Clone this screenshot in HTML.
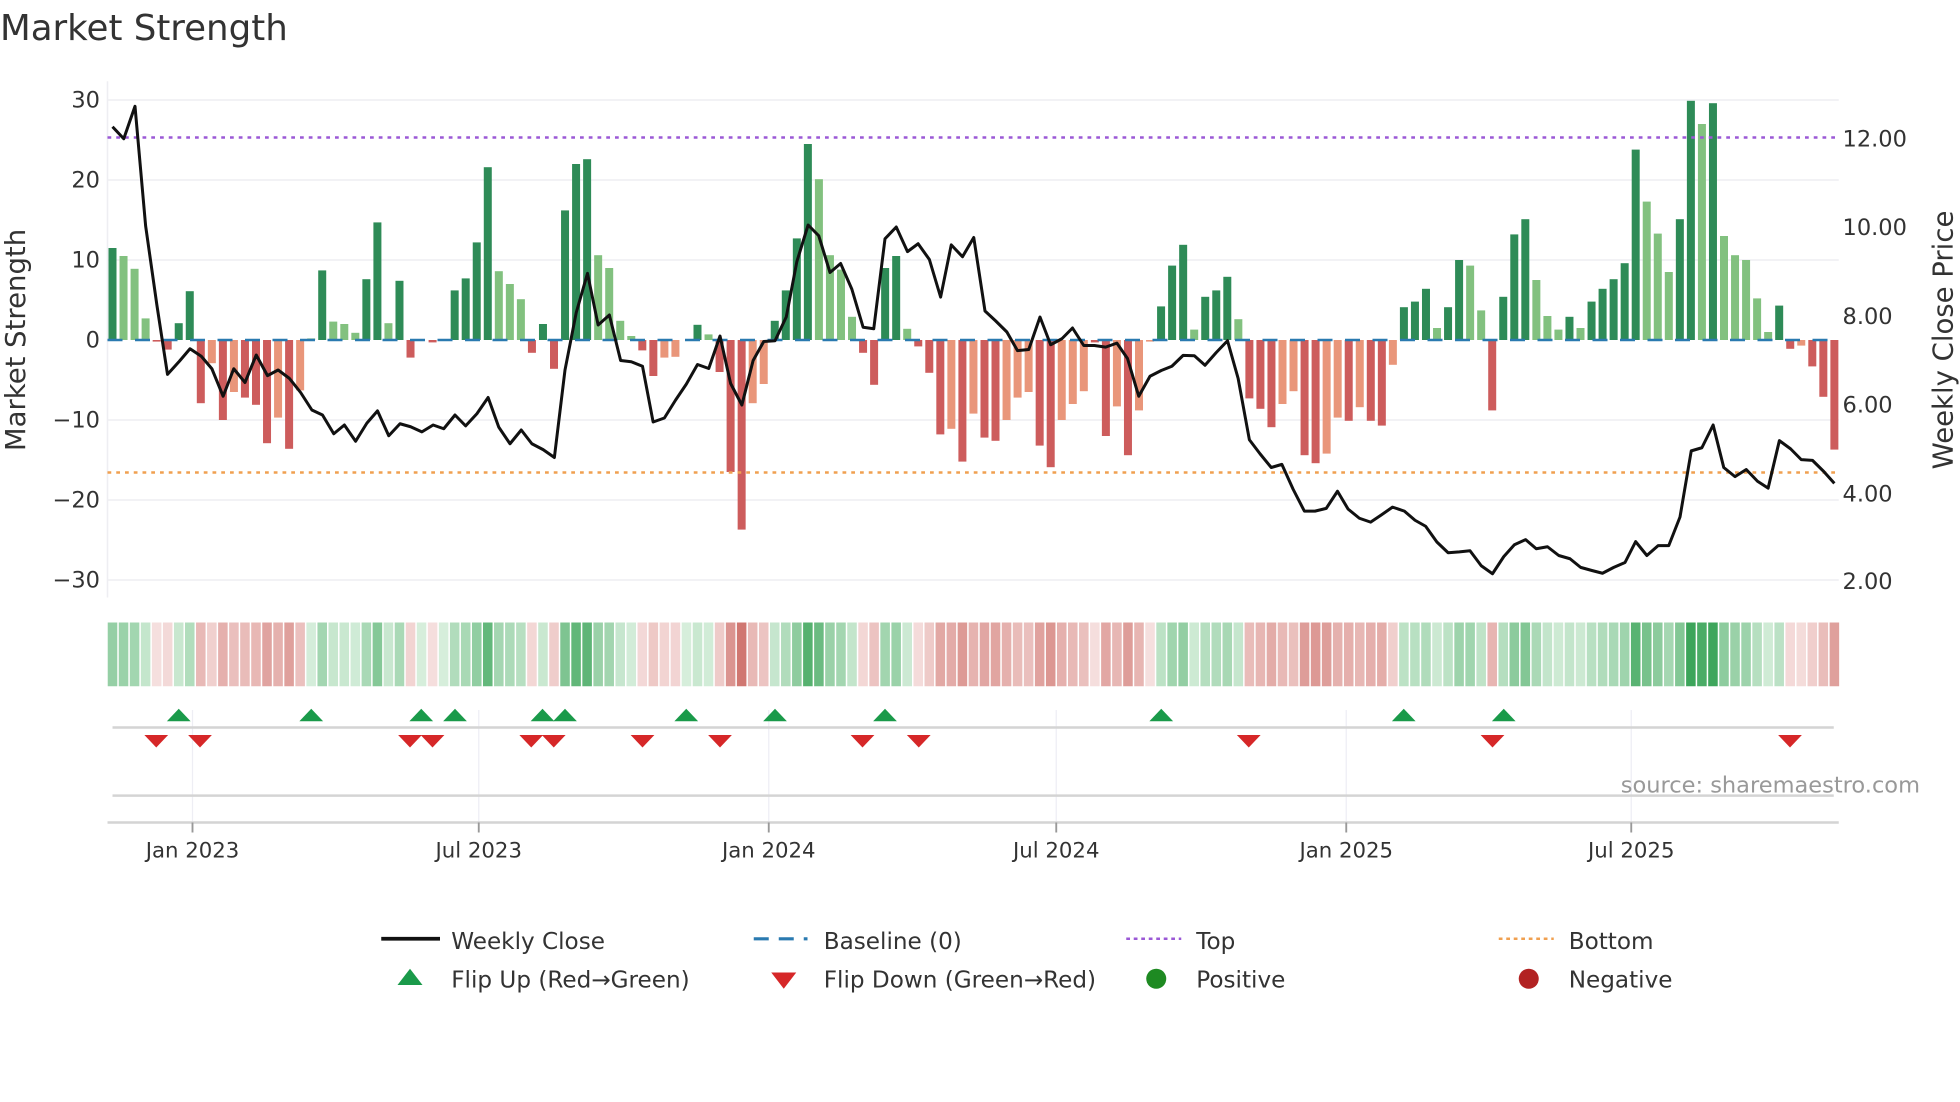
<!DOCTYPE html>
<html><head><meta charset="utf-8"><style>
html,body{margin:0;padding:0;background:#fff;}
svg{display:block;}
text{font-family:"DejaVu Sans","Liberation Sans",sans-serif;fill:#333;}
</style></head><body>
<svg id="s" width="1960" height="1102" viewBox="0 0 1568 881.6" xmlns="http://www.w3.org/2000/svg">
<rect width="1568" height="882" fill="#fff"/>
<text x="0" y="32" font-size="28.5">Market Strength</text>
<g stroke="#eeeef2" stroke-width="1.2">
<line x1="86" x2="1471" y1="80" y2="80"/><line x1="86" x2="1471" y1="144" y2="144"/><line x1="86" x2="1471" y1="208" y2="208"/>
<line x1="86" x2="1471" y1="336" y2="336"/><line x1="86" x2="1471" y1="400" y2="400"/><line x1="86" x2="1471" y1="464" y2="464"/>
<line x1="86" x2="86" y1="65" y2="478"/>
</g>
<g font-size="18" text-anchor="end">
<text x="80" y="86">30</text><text x="80" y="150">20</text><text x="80" y="214">10</text><text x="80" y="278">0</text>
<text x="80" y="342">−10</text><text x="80" y="406">−20</text><text x="80" y="470">−30</text>
</g>
<g font-size="18">
<text x="1474" y="117">12.00</text><text x="1474" y="188">10.00</text><text x="1474" y="259">8.00</text>
<text x="1474" y="330">6.00</text><text x="1474" y="401">4.00</text><text x="1474" y="471">2.00</text>
</g>
<text transform="translate(20,272) rotate(-90)" font-size="22" text-anchor="middle">Market Strength</text>
<text transform="translate(1562,272) rotate(-90)" font-size="22" text-anchor="middle">Weekly Close Price</text>
<g id="bars"></g>
<line x1="86" x2="1471" y1="272" y2="272" stroke="#2a7ab0" stroke-width="2" stroke-dasharray="12 10"/>
<line x1="86" x2="1471" y1="110" y2="110" stroke="#9b59d6" stroke-width="2" stroke-dasharray="3 4"/>
<line x1="86" x2="1471" y1="378" y2="378" stroke="#f0a050" stroke-width="2" stroke-dasharray="3 4"/>
<polyline id="price" fill="none" stroke="#111" stroke-width="2.4" stroke-linejoin="round"/>
<g id="heat"></g>
<g stroke="#eeeef4" stroke-width="1">
<line x1="154" x2="154" y1="568" y2="658"/><line x1="383" x2="383" y1="568" y2="658"/><line x1="615" x2="615" y1="568" y2="658"/>
<line x1="845" x2="845" y1="568" y2="658"/><line x1="1077" x2="1077" y1="568" y2="658"/><line x1="1305" x2="1305" y1="568" y2="658"/>
</g>
<line x1="90" x2="1467" y1="582" y2="582" stroke="#d4d4d4" stroke-width="2"/>
<line x1="90" x2="1467" y1="636.5" y2="636.5" stroke="#d4d4d4" stroke-width="2"/>
<line x1="86" x2="1471" y1="658" y2="658" stroke="#d4d4d4" stroke-width="2"/>
<g stroke="#999" stroke-width="1.5">
<line x1="154" x2="154" y1="658" y2="666"/><line x1="383" x2="383" y1="658" y2="666"/><line x1="615" x2="615" y1="658" y2="666"/>
<line x1="845" x2="845" y1="658" y2="666"/><line x1="1077" x2="1077" y1="658" y2="666"/><line x1="1305" x2="1305" y1="658" y2="666"/>
</g>
<g id="flips"></g>
<text x="1536" y="634" font-size="18" text-anchor="end" style="fill:#999">source: sharemaestro.com</text>
<g font-size="17" text-anchor="middle">
<text x="154" y="686">Jan 2023</text><text x="383" y="686">Jul 2023</text><text x="615" y="686">Jan 2024</text>
<text x="845" y="686">Jul 2024</text><text x="1077" y="686">Jan 2025</text><text x="1305" y="686">Jul 2025</text>
</g>
<g font-size="18.5">
<line x1="305" x2="352" y1="751" y2="751" stroke="#111" stroke-width="3"/>
<text x="361" y="759">Weekly Close</text>
<line x1="603" x2="646" y1="751" y2="751" stroke="#2a7ab0" stroke-width="2.5" stroke-dasharray="12 8"/>
<text x="659" y="759">Baseline (0)</text>
<line x1="901" x2="945" y1="751" y2="751" stroke="#9b59d6" stroke-width="2" stroke-dasharray="3 3"/>
<text x="957" y="759">Top</text>
<line x1="1199" x2="1243" y1="751" y2="751" stroke="#f0a050" stroke-width="2" stroke-dasharray="3 3"/>
<text x="1255" y="759">Bottom</text>
<polygon points="318,788 338,788 328,775" fill="#1a9a4a"/>
<text x="361" y="790">Flip Up (Red→Green)</text>
<polygon points="617,778 637,778 627,791" fill="#d62728"/>
<text x="659" y="790">Flip Down (Green→Red)</text>
<circle cx="925" cy="783" r="8" fill="#1e8a22"/>
<text x="957" y="790">Positive</text>
<circle cx="1223" cy="783" r="8" fill="#b22222"/>
<text x="1255" y="790">Negative</text>
</g>
</svg>
<script>
var V="11.5d 10.5l 8.9l 2.7l -0.2r -1.2r 2.1d 6.1d -7.9r -2.9s -10r -6.5s -7.2r -8.1r -12.9r -9.7s -13.6r -6.3s 0.2l 8.7d 2.3l 2l 0.9l 7.6d 14.7d 2.1l 7.4d -2.2r 0n -0.3r 0n 6.2d 7.7d 12.2d 21.6d 8.6l 7l 5.1l -1.6r 2d -3.6r 16.2d 22d 22.6d 10.6l 9l 2.4l 0.5l -1.3r -4.5r -2.2s -2.1s 0n 1.9d 0.7l -4r -16.5r -23.7r -7.9s -5.5s 2.4d 6.2d 12.7d 24.5d 20.1l 10.6l 8.8l 2.9l -1.6r -5.6r 9d 10.5d 1.4l -0.8r -4.1r -11.8r -11.1s -15.2r -9.2s -12.2r -12.6r -10s -7.2s -6.5s -13.2r -15.9r -10s -8s -6.4s -0.3r -12r -8.3s -14.4r -8.8s -0.2s 4.2d 9.3d 11.9d 1.3l 5.4d 6.2d 7.9d 2.6l -7.3r -8.6r -10.9r -8s -6.4s -14.4r -15.4r -14.2s -9.7s -10.1r -8.4s -10.1r -10.7r -3.1s 4.1d 4.8d 6.4d 1.5l 4.1d 10d 9.3l 3.7l -8.8r 5.4d 13.2d 15.1d 7.5l 3l 1.3l 2.9d 1.5l 4.8d 6.4d 7.6d 9.6d 23.8d 17.3l 13.3l 8.5l 15.1d 29.9d 27l 29.6d 13l 10.6l 10l 5.2l 1l 4.3d -1.1r -0.7s -3.3r -7.1r -13.7r".split(" ");
var C={d:"#2e8b57",l:"#82c17f",r:"#cd5c5c",s:"#e9967a",n:"#fff"};
var NS="http://www.w3.org/2000/svg";
function el(p,t,a){var e=document.createElementNS(NS,t);for(var k in a)e.setAttribute(k,a[k]);p.appendChild(e);return e;}
var bars=document.getElementById("bars"),heat=document.getElementById("heat");
var n=V.length,sp=1377.5/(n-1);
function mix(a,b,t){return "rgb("+a.map(function(x,i){return Math.round(x+(b[i]-x)*t)}).join(",")+")";}
for(var i=0;i<n;i++){
 var v=parseFloat(V[i]),c=V[i].slice(-1),x=90+i*sp;
 if(v!==0){var y=272-v*6.4;el(bars,"rect",{x:x-3.2,y:Math.min(y,272),width:6.4,height:Math.abs(v*6.4),fill:C[c]});}
 var col;
 if(v>=0){var t=Math.min(v/30,1);col=mix([214,238,219],[60,165,90],Math.pow(t,0.9));}
 else{var t=Math.min(-v/24,1);col=mix([246,224,223],[208,118,112],Math.pow(t,0.9));}
 el(heat,"rect",{x:x-sp/2+0.6,y:498,width:sp-1.2,height:51,fill:col});
}
var P=[[90,101.4],[99,111],[108,85],[116.5,180.7],[125.5,244],[134,299.5],[143.5,289],[152,279],[161,285],[169.5,295],[178.5,317],[187,295],[196,306],[205,284],[214,300.5],[222.5,296],[231.5,302.7],[240.5,314],[249.5,328],[258,332],[267,347],[275.5,340],[284.5,353],[293.5,338.5],[302,328.7],[311,348.6],[320,339],[328.5,341.4],[337.5,345.5],[346.5,340],[355,343],[364,332],[372.5,340.7],[381.5,331],[390.5,318],[399,341.7],[408,355],[417,344],[425.5,355],[434.5,359.7],[443.5,366],[452,296],[461,250],[470,218.7],[478.5,260],[487.5,252],[496.5,288.4],[505,289.4],[514,293],[522.5,337.6],[531.5,334.4],[540.5,320],[549,307.4],[558,291.6],[567,294.8],[576,268.8],[584.5,306.8],[593.5,324],[602.5,288.4],[611,273.2],[620,272.6],[629,253.6],[637.5,209.2],[646.5,180],[655,188.6],[664,218],[672.5,210.8],[681.5,231.4],[690.5,261.8],[699,263],[708,191],[717,181.6],[726,201.3],[734.5,195],[743.5,207.6],[752.5,237.7],[761,195.9],[770,205.4],[779,190],[788,248.8],[796.5,256.7],[805.5,265.6],[814,280.5],[823,279.6],[832,253.6],[840.5,275.8],[849.5,271],[858,262.4],[867,276.4],[875.5,276.4],[884.5,277.7],[893.5,274.5],[902,286.8],[911,317],[920,301],[929,296.4],[937.5,293],[946.5,284.3],[955.5,284.6],[964,292.2],[973,282],[982,272.6],[990.5,302.7],[999.5,351.8],[1008,363],[1017,374],[1025.5,371.5],[1034.5,391.4],[1043.5,408.9],[1052,408.9],[1061,406.7],[1070,393],[1078.5,407.3],[1087.5,414.6],[1096.5,417.7],[1105,412],[1114,405.7],[1123.5,408.9],[1132,416.2],[1140.5,421],[1149.5,433.6],[1158.5,442.2],[1167.5,441.5],[1176,440.6],[1185,452.6],[1194,459],[1203,445.3],[1211.5,435.8],[1220.5,431.7],[1229,439],[1238,437.4],[1247,444.4],[1256,447],[1264.5,453.9],[1273.5,456.4],[1282,458.6],[1291,453.9],[1300,450],[1308.5,433.3],[1317.5,444.4],[1326.5,436.5],[1335,436.5],[1344,413.6],[1353,360.7],[1361.5,358.2],[1370.5,340],[1379,374],[1388,381.3],[1397,375.6],[1406,385],[1414.5,390.5],[1423.5,352.5],[1432.5,359.1],[1441,367.7],[1450,368.3],[1459,377.2],[1467.5,386.7]];
document.getElementById("price").setAttribute("points",P.map(function(p){return p.join(",")}).join(" "));
var fl=document.getElementById("flips");
[143,249,337,364,434,452,549,620,708,929,1123,1203].forEach(function(x){el(fl,"polygon",{points:(x-9.5)+",577 "+(x+9.5)+",577 "+x+",567",fill:"#1a9a4a"});});
[125,160,328,346,425,443,514,576,690,735,999,1194,1432].forEach(function(x){el(fl,"polygon",{points:(x-9.5)+",588 "+(x+9.5)+",588 "+x+",598",fill:"#d62728"});});
</script>
</body></html>
